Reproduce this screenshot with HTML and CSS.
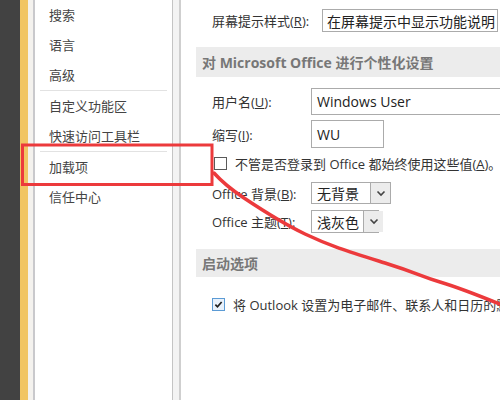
FILE: index.html
```html
<!DOCTYPE html>
<html lang="zh-CN">
<head>
<meta charset="utf-8">
<title>Office 选项</title>
<link rel="stylesheet" href="styles.css">
</head>
<body>
<div class="page">
  <div class="strip-dark"></div>
  <div class="strip-accent"></div>
  <div class="strip-light"></div>
  <nav class="nav">
    <div class="nav-item">搜索</div>
    <div class="nav-item">语言</div>
    <div class="nav-item">高级</div>
    <div class="nav-sep"></div>
    <div class="nav-item">自定义功能区</div>
    <div class="nav-item">快速访问工具栏</div>
    <div class="nav-sep"></div>
    <div class="nav-item">加载项</div>
    <div class="nav-item">信任中心</div>
  </nav>
  <div class="gutter"></div>
  <main class="content">
    <div class="row row-tip">
      <span class="label label-wide">屏幕提示样式(<u>R</u>):</span>
      <div class="field select-tip">在屏幕提示中显示功能说明</div>
    </div>
    <div class="section sec-1">对 Microsoft Office 进行个性化设置</div>
    <div class="row row-user">
      <span class="label">用户名(<u>U</u>):</span>
      <div class="field input-user">Windows User</div>
    </div>
    <div class="row row-init">
      <span class="label">缩写(<u>I</u>):</span>
      <div class="field input-init">WU</div>
    </div>
    <div class="row row-check1">
      <span class="checkbox"></span>
      <span class="check-text">不管是否登录到 Office 都始终使用这些值(<u>A</u>)。</span>
    </div>
    <div class="row row-bg">
      <span class="label">Office 背景(<u>B</u>):</span>
      <div class="field select select-bg"><span class="sel-text">无背景</span><span class="sel-btn"><svg width="10" height="7" viewBox="0 0 10 7"><polyline points="1.5,1.5 5,5 8.5,1.5" fill="none" stroke="#444" stroke-width="1.6"/></svg></span></div>
    </div>
    <div class="row row-theme">
      <span class="label">Office 主题(<u>T</u>):</span>
      <div class="field select select-theme"><span class="sel-text">浅灰色</span><span class="sel-btn"><svg width="10" height="7" viewBox="0 0 10 7"><polyline points="1.5,1.5 5,5 8.5,1.5" fill="none" stroke="#444" stroke-width="1.6"/></svg></span></div>
    </div>
    <div class="section sec-2">启动选项</div>
    <div class="row row-check2">
      <span class="checkbox checked"><svg width="13" height="13" viewBox="0 0 13 13"><polyline points="2.8,6.6 5.3,9.2 10.2,3.6" fill="none" stroke="#1f1f1f" stroke-width="2"/></svg></span>
      <span class="check-text">将 Outlook 设置为电子邮件、联系人和日历的默认程序</span>
    </div>
  </main>
  <svg class="annot" width="500" height="400" viewBox="0 0 500 400">
    <rect x="22.5" y="145" width="189.5" height="39.5" fill="none" stroke="#ec3a3c" stroke-width="3"/>
    <path d="M214 173 C 222 182, 232 190, 244 198 S 280 222, 305 234 S 350 252, 385 263 S 420 276, 440 282 S 480 296, 502 305" fill="none" stroke="#ec3a3c" stroke-width="3.5" stroke-linecap="round"/>
  </svg>
</div>
</body>
</html>
```

FILE: styles.css
```css
html, body {
  margin: 0;
  padding: 0;
  background: #ffffff;
}

body {
  width: 500px;
  height: 400px;
  overflow: hidden;
  font-family: "Open Sans", "Noto Sans CJK SC", sans-serif;
  font-size: 13px;
  color: #3a3a3a;
}

.page {
  position: relative;
  display: flex;
  width: 500px;
  height: 400px;
}

.strip-dark {
  width: 20px;
  background: #424242;
  flex: none;
}

.strip-accent {
  width: 8px;
  background: #f1c563;
  flex: none;
}

.strip-light {
  width: 5px;
  background: #f4f2ee;
  border-right: 2px solid #c9c9cc;
  flex: none;
}

.nav {
  width: 137px;
  flex: none;
  background: #ffffff;
  border-right: 1px solid #c4c4c4;
  display: flex;
  flex-direction: column;
}

.nav-item {
  height: 30px;
  line-height: 30px;
  padding-left: 14px;
  color: #444444;
  white-space: nowrap;
}

.nav-sep {
  height: 1px;
  background: #e2e2e2;
  margin: 0 5px 0 5px;
}

.gutter {
  width: 6px;
  flex: none;
  background: #f3f3f3;
  border-right: 2px solid #cfcfcf;
}

.content {
  flex: 1;
  display: flex;
  flex-direction: column;
  padding: 9px 0 0 15px;
  min-width: 0;
}

.row {
  display: flex;
  align-items: center;
  padding-left: 16px;
  white-space: nowrap;
}

.label {
  width: 99px;
  flex: none;
  color: #333333;
}

.label-wide {
  width: 110px;
}

.field {
  box-sizing: border-box;
  border: 1px solid #ababab;
  background: #ffffff;
  height: 100%;
  display: flex;
  align-items: center;
  padding-left: 5px;
  color: #222222;
  flex: none;
  font-size: 14px;
}

.row-tip { height: 23px; }
.select-tip { width: 176px; padding-left: 4px; }

.section {
  background: #ececec;
  color: #777777;
  font-weight: bold;
  font-size: 14px;
  display: flex;
  align-items: center;
  padding-left: 6px;
  white-space: nowrap;
}

.sec-1 { margin-top: 15px; height: 30px; }
.sec-2 { margin-top: 16px; height: 28px; }

.row-user { margin-top: 11px; height: 27px; }
.input-user { width: 200px; }

.row-init { margin-top: 5px; height: 28px; }
.input-init { width: 73px; }

.row-check1 { margin-top: 6px; height: 18px; }

.checkbox {
  box-sizing: border-box;
  width: 13px;
  height: 13px;
  border: 1px solid #5a5a5a;
  background: #ffffff;
  margin-left: 2px;
  margin-right: 8px;
  flex: none;
  display: flex;
  align-items: center;
  justify-content: center;
}

.checkbox svg {
  display: block;
}

.checkbox.checked {
  border-color: #5b9bd5;
  background: #e8f1fb;
  margin-left: 0;
}

.check-text {
  color: #333333;
}

.row-bg { margin-top: 10px; height: 22px; }
.row-theme { margin-top: 6px; height: 23px; }

.select {
  padding-right: 0;
  justify-content: space-between;
}

.select-bg { width: 80px; }
.select-theme { width: 68px; }

.sel-text {
  padding-right: 4px;
}

.sel-btn {
  box-sizing: border-box;
  width: 20px;
  height: 100%;
  background: #ececec;
  border-left: 1px solid #ababab;
  display: flex;
  align-items: center;
  justify-content: center;
  flex: none;
}

.row-check2 { margin-top: 18px; height: 18px; }

.annot {
  position: absolute;
  left: 0;
  top: 0;
  pointer-events: none;
}
```
